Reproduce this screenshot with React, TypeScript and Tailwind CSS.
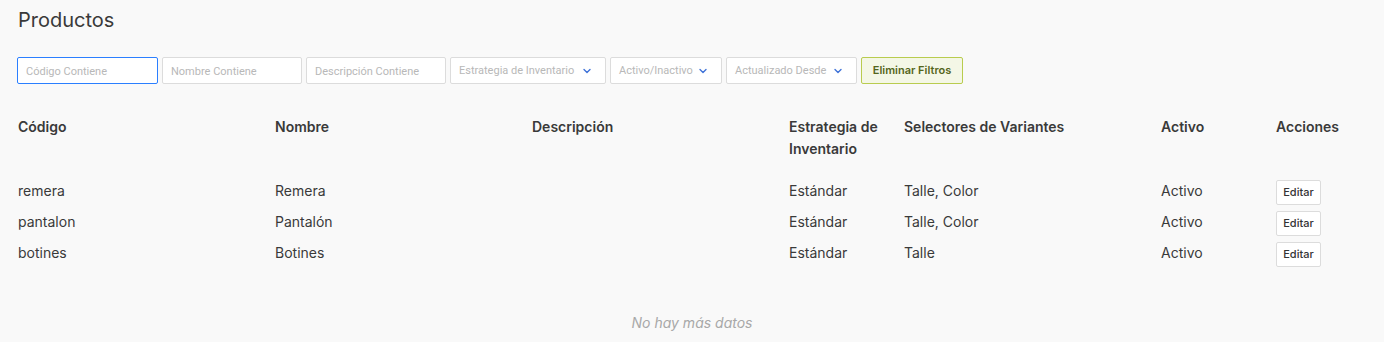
import { ChevronDown } from "lucide-react";

type Product = {
  code: string;
  name: string;
  description: string;
  strategy: string;
  selectors: string;
  active: string;
};

const products: Product[] = [
  { code: "remera", name: "Remera", description: "", strategy: "Estándar", selectors: "Talle, Color", active: "Activo" },
  { code: "pantalon", name: "Pantalón", description: "", strategy: "Estándar", selectors: "Talle, Color", active: "Activo" },
  { code: "botines", name: "Botines", description: "", strategy: "Estándar", selectors: "Talle", active: "Activo" },
];

function TextFilter({ placeholder, focused, width }: { placeholder: string; focused?: boolean; width: string }) {
  return (
    <label
      className={[
        "flex h-[27px] rounded-[2px] border bg-white",
        focused ? "border-blue-500" : "border-[#dcdcdc]",
        width,
      ].join(" ")}
    >
      <input
        className="h-full w-full min-w-0 bg-transparent px-2 pt-px font-['Roboto',sans-serif] text-[11px] text-[#333] outline-none placeholder:text-[#b8b8b8]"
        placeholder={placeholder}
      />
    </label>
  );
}

function SelectFilter({ label, width }: { label: string; width: string }) {
  return (
    <div
      className={[
        "flex h-[27px] items-center justify-between rounded-[2px] border border-[#dcdcdc] bg-white pl-2 pr-[12px] pt-px font-['Roboto',sans-serif] text-[11px] text-[#b8b8b8]",
        width,
      ].join(" ")}
    >
      <span>{label}</span>
      <ChevronDown className="h-[12px] w-[12px] text-[#3f72d8]" strokeWidth={2.75} />
    </div>
  );
}

export default function App() {
  return (
    <div className="min-h-[342px] bg-[#f9f9f9] px-[18px] font-['Inter','Roboto',sans-serif] text-[#333]">
      <h1 className="pt-[6px] text-[20px] leading-[28px] text-[#3a3a3a]">Productos</h1>

      <div className="mt-[23px] flex items-center gap-1">
        <TextFilter placeholder="Código Contiene" focused width="w-[141px] -ml-px" />
        <TextFilter placeholder="Nombre Contiene" width="w-[140px]" />
        <TextFilter placeholder="Descripción Contiene" width="w-[140px]" />
        <SelectFilter label="Estrategia de Inventario" width="w-[156px]" />
        <SelectFilter label="Activo/Inactivo" width="w-[112px]" />
        <SelectFilter label="Actualizado Desde" width="w-[131px]" />
        <button className="h-[27px] w-[102px] rounded-[2px] border border-[#b9cc4f] bg-[#f4f7e6] text-[11px] font-semibold text-[#55661c]">
          Eliminar Filtros
        </button>
      </div>

      <table className="mt-[32px] w-full table-fixed border-collapse text-left text-[14px]">
        <colgroup>
          <col className="w-[257px]" />
          <col className="w-[257px]" />
          <col className="w-[257px]" />
          <col className="w-[115px]" />
          <col className="w-[257px]" />
          <col className="w-[115px]" />
          <col />
        </colgroup>
        <thead>
          <tr className="align-top text-[#3a3a3a]">
            <th className="pb-[15px] font-semibold leading-[22px]">Código</th>
            <th className="pb-[15px] font-semibold leading-[22px]">Nombre</th>
            <th className="pb-[15px] font-semibold leading-[22px]">Descripción</th>
            <th className="pb-[15px] pr-2 font-semibold leading-[22px]">Estrategia de Inventario</th>
            <th className="pb-[15px] font-semibold leading-[22px]">Selectores de Variantes</th>
            <th className="pb-[15px] font-semibold leading-[22px]">Activo</th>
            <th className="pb-[15px] font-semibold leading-[22px]">Acciones</th>
          </tr>
        </thead>
        <tbody>
          {products.map((product) => (
            <tr className="h-[31px] text-[#3a3a3a]" key={product.code}>
              <td>{product.code}</td>
              <td>{product.name}</td>
              <td>{product.description}</td>
              <td>{product.strategy}</td>
              <td>{product.selectors}</td>
              <td>{product.active}</td>
              <td className="pt-[4px]">
                <button className="h-[25px] w-[45px] rounded-[2px] border border-[#dcdcdc] bg-white text-[11px] font-medium text-[#333]">
                  Editar
                </button>
              </td>
            </tr>
          ))}
        </tbody>
      </table>

      <p className="mt-[44px] text-center text-[14px] italic text-[#a8a8a8]">No hay más datos</p>
    </div>
  );
}
